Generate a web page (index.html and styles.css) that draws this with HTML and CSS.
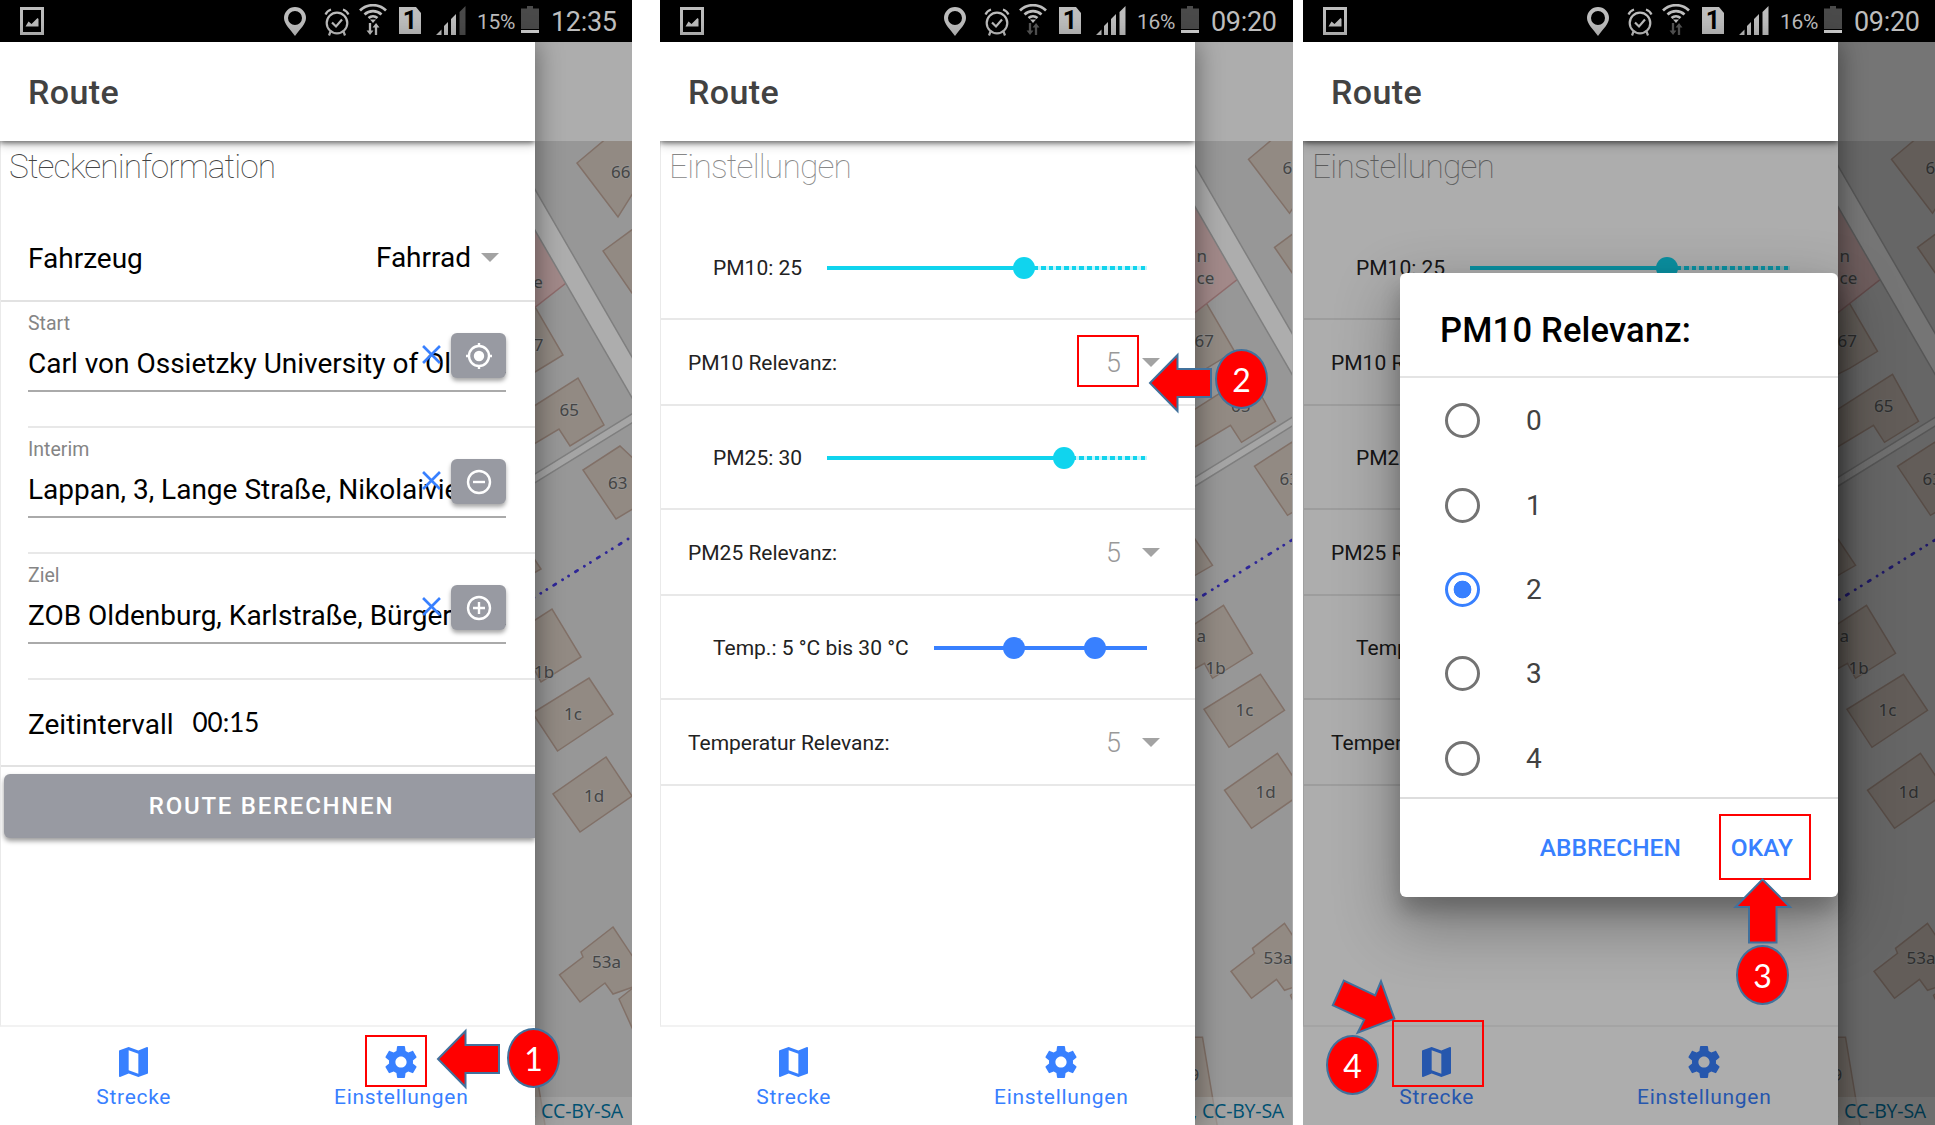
FILE: index.html
```
<!DOCTYPE html>
<html lang="de">
<head>
<meta charset="utf-8">
<title>Route</title>
<link rel="stylesheet" href="styles.css">
</head>
<body>
<svg class="defs" width="0" height="0" aria-hidden="true">
  <symbol id="photo" viewBox="0 0 24 28"><path fill="#bdbdbd" fill-rule="evenodd" d="M0 0h24v28H0zM3 3v22h18V3zM5.500 19.500l3-5 3 2.500 6-6 1 1v7.500z"/></symbol>
  <symbol id="pin" viewBox="0 0 22 29"><path fill="#bdbdbd" fill-rule="evenodd" d="M11 0a11 11 0 0 1 11 11c0 6-6 11-11 18C6 22 0 17 0 11A11 11 0 0 1 11 0zm0 4a7 7 0 1 0 0 14 7 7 0 0 0 0-14z"/></symbol>
  <symbol id="alarm" viewBox="0 0 26 28"><g fill="none" stroke="#bdbdbd" stroke-width="2.200"><circle cx="13" cy="15" r="10.300"/><path d="M8 14.500l4 4 6-7M1.500 6.500C2.500 4 4 2.500 7 1.500M24.500 6.500C23.500 4 22 2.500 19 1.500M6.500 23.500l-1.500 4M19.500 23.500l1.500 4"/></g></symbol>
  <symbol id="wifi" viewBox="0 0 28 19"><g fill="none" stroke="#bdbdbd" stroke-width="2.700"><path d="M1 6.500a18.500 18.500 0 0 1 26 0M5.500 10.500a12.500 12.500 0 0 1 17 0M9.500 14a7 7 0 0 1 9 0"/></g><path fill="#bdbdbd" d="M11 15.500h6L14 19z"/></symbol>
  <symbol id="updown" viewBox="0 0 14 13"><path fill="currentColor" d="M2.500 0h2.500v8h2.500L3.800 13 0 8h2.500zM9 13h2.500V5H14L10.300 0 6.500 5H9z"/></symbol>
  <symbol id="sim" viewBox="0 0 22 27"><path fill="#bdbdbd" d="M0 0h17l5 6v21H0z"/></symbol>
  <symbol id="signal" viewBox="0 0 30 29"><path fill="#bdbdbd" d="M0 29l5.500-5.500V29zM8 29v-9l4-4v13zM15 29V13l5-5v21z"/><path fill="currentColor" d="M23.500 29V6L29.500 0v29z"/></symbol>
  <symbol id="battery" viewBox="0 0 18 27"><path fill="#4a4a4a" d="M0 2.500h6V0h6v2.500h6V23H0z"/><path fill="#cfcfcf" d="M0 24h18v3H0z"/></symbol>
  <symbol id="map" viewBox="3 3 18 18" preserveAspectRatio="none"><path fill="currentColor" d="M20.500 3l-.16.030L15 5.100 9 3 3.360 4.900c-.21.070-.36.250-.36.480V20.500c0 .28.220.5.500.5l.16-.03L9 18.900l6 2.100 5.640-1.900c.21-.07.360-.25.360-.48V3.500c0-.28-.22-.5-.5-.5zM15 19l-6-2.110V5l6 2.110V19z"/></symbol>
  <symbol id="gear" viewBox="2 2 20 20"><path fill="currentColor" d="M19.430 12.980c.04-.32.070-.64.070-.98s-.03-.66-.07-.98l2.110-1.650c.19-.15.240-.42.120-.64l-2-3.460c-.12-.22-.39-.3-.61-.22l-2.490 1c-.52-.4-1.080-.73-1.690-.98l-.38-2.650C14.460 2.180 14.250 2 14 2h-4c-.25 0-.46.180-.49.420l-.38 2.650c-.61.250-1.170.59-1.690.98l-2.490-1c-.23-.09-.49 0-.61.220l-2 3.460c-.13.220-.07.490.12.640l2.110 1.650c-.04.320-.07.650-.07.980s.03.660.07.980l-2.110 1.650c-.19.150-.24.420-.12.640l2 3.460c.12.220.39.300.61.220l2.490-1c.52.400 1.080.730 1.690.980l.38 2.650c.03.240.24.420.49.420h4c.25 0 .46-.18.490-.42l.38-2.650c.61-.25 1.170-.59 1.690-.98l2.490 1c.23.090.49 0 .61-.22l2-3.460c.12-.22.070-.49-.12-.64l-2.110-1.650zM12 15.500c-1.930 0-3.500-1.570-3.500-3.500s1.570-3.500 3.500-3.500 3.500 1.570 3.500 3.500-1.570 3.500-3.500 3.500z"/></symbol>
  <symbol id="ground" viewBox="500 100 140 1030" overflow="visible">
    <g fill="#d7ccc2" stroke="#bfa699" stroke-width="1.500">
      <path d="M577 163l31-26h60l-50 80z"/><path d="M603 251l60-44v96l-31-10z"/>
      <path d="M520 275l15 32 28 48-28 17-30 15z"/>
      <path d="M520 415l58-37 26 47-34 21-11-17-40 24z"/>
      <path d="M620 446l-37 24 33 49 50-30z"/><path d="M515 530l26 39-26 15z"/>
      <path d="M515 633l37-24 29 48-40 25-8-15-18 10z"/>
      <path d="M589 678l24 36-55.500 37-25-38z"/><path d="M606 757l26 39-52 36-27-38z"/>
      <path d="M613 927l40 60-20 0-20 7-8-11-25 19-20.500-27 23.500-18-2-5z"/><path d="M619 999l30-24v90z"/>
      <path d="M515 1041h16l15 90h-30z"/>
    </g>
    <path fill="#efcaca" stroke="#d3a0a0" stroke-width="1.500" d="M515 190l51 93-51 40z"/>
    <path d="M505 158L670 443" stroke="#bbb" stroke-width="22"/>
    <path d="M505 158L670 443" stroke="#fff" stroke-width="19"/>
    <path d="M500 500L665 398" stroke="#bbb" stroke-width="9"/>
    <path d="M500 500L665 398" stroke="#f4f4f4" stroke-width="6"/>
    <path d="M510 612.500L665 516" stroke="#4438e0" stroke-width="2.800" stroke-linecap="round" stroke-dasharray="2.500 8 0.100 7 0.100 8"/>
  </symbol>
  <symbol id="arrow" viewBox="-1 -1 64 58" overflow="visible"><path fill="#f00" stroke="#41719c" stroke-width="2" d="M0 28L27.500 0v14H61v28H27.500v14z"/></symbol>
</svg>

<main class="board">

<section class="phone">
  <header class="status">
    <svg class="photo"><use href="#photo"/></svg>
    <svg class="pin"><use href="#pin"/></svg>
    <svg class="alarm"><use href="#alarm"/></svg>
    <span class="net"><svg class="wifi"><use href="#wifi"/></svg><svg class="updown"><use href="#updown"/></svg></span>
    <span class="sim"><svg><use href="#sim"/></svg><b>1</b></span>
    <svg class="signal weak"><use href="#signal"/></svg>
    <span class="percent">15%</span>
    <svg class="battery"><use href="#battery"/></svg>
    <span class="clock">12:35</span>
  </header>
  <div class="view">
    <div class="backdrop">
      <svg class="ground" viewBox="0 141 632 984"><use href="#ground" x="500" y="100" width="140" height="1030"/>
        <g class="labels"><text x="611" y="178">66</text><text x="513.500" y="265.500">n</text><text x="525" y="288">ce</text><text x="524" y="351">67</text><text x="559.500" y="416">65</text><text x="608" y="489">63</text><text x="534" y="678">1b</text><text x="564" y="720">1c</text><text x="584" y="802">1d</text><text x="592" y="968">53a</text></g>
      </svg>
      <div class="credit">, CC-BY-SA</div>
    </div>
    <div class="drawer">
      <div class="titlebar">Route</div>
      <div class="content">
        <h1 class="dark">Steckeninformation</h1>
        <div class="line vehicle"><span>Fahrzeug</span><span class="pick">Fahrrad<i class="caret"></i></span></div>
        <div class="place"><label>Start</label><div class="entry">Carl von Ossietzky University of Oldenburg</div>
          <svg class="clear" viewBox="0 0 18 18"><path d="M1 1l16 16M17 1L1 17"/></svg>
          <span class="square"><svg viewBox="0 0 28 28"><circle cx="14" cy="14" r="10"/><circle cx="14" cy="14" r="4" fill="#fff"/><path d="M14 1v4M14 23v4M1 14h4M23 14h4"/></svg></span></div>
        <div class="place"><label>Interim</label><div class="entry">Lappan, 3, Lange Straße, Nikolaiviertel</div>
          <svg class="clear" viewBox="0 0 18 18"><path d="M1 1l16 16M17 1L1 17"/></svg>
          <span class="square"><svg viewBox="0 0 28 28"><circle cx="14" cy="14" r="11"/><path d="M8 14h12"/></svg></span></div>
        <div class="place"><label>Ziel</label><div class="entry">ZOB Oldenburg, Karlstraße, Bürgerfelde</div>
          <svg class="clear" viewBox="0 0 18 18"><path d="M1 1l16 16M17 1L1 17"/></svg>
          <span class="square"><svg viewBox="0 0 28 28"><circle cx="14" cy="14" r="11"/><path d="M8 14h12M14 8v12"/></svg></span></div>
        <div class="line interval"><span>Zeitintervall</span><span class="time">00:15</span></div>
        <button class="compute">ROUTE BERECHNEN</button>
      </div>
      <nav class="tabs"><a><svg class="map"><use href="#map"/></svg>Strecke</a><a><svg class="gear"><use href="#gear"/></svg>Einstellungen</a></nav>
    </div>
  </div>
  <div class="mark box1"></div>
  <svg class="arrow a1"><use href="#arrow"/></svg>
  <div class="bubble b1">1</div>
</section>

<section class="phone">
  <header class="status">
    <svg class="photo"><use href="#photo"/></svg>
    <svg class="pin"><use href="#pin"/></svg>
    <svg class="alarm"><use href="#alarm"/></svg>
    <span class="net"><svg class="wifi"><use href="#wifi"/></svg><svg class="updown idle"><use href="#updown"/></svg></span>
    <span class="sim"><svg><use href="#sim"/></svg><b>1</b></span>
    <svg class="signal"><use href="#signal"/></svg>
    <span class="percent">16%</span>
    <svg class="battery"><use href="#battery"/></svg>
    <span class="clock">09:20</span>
  </header>
  <div class="view">
    <div class="backdrop">
      <svg class="ground" viewBox="-11.500 144.700 632 984"><use href="#ground" x="500" y="100" width="140" height="1030"/>
        <g class="labels"><text x="611" y="178">66</text><text x="525" y="265.500">n</text><text x="525" y="288">ce</text><text x="523" y="351">67</text><text x="559.500" y="416">65</text><text x="608" y="489">63</text><text x="525" y="646">a</text><text x="534" y="678">1b</text><text x="564" y="720">1c</text><text x="584" y="802">1d</text><text x="592" y="968">53a</text><text x="518" y="1085">9</text></g>
      </svg>
      <div class="credit">, CC-BY-SA</div>
    </div>
    <div class="drawer">
      <div class="titlebar">Route</div>
      <div class="content">
        <h1>Einstellungen</h1>
        <div class="slide"><span>PM10: 25</span><div class="track"><i class="fill" style="width:61.700%"></i><i class="knob" style="left:61.700%"></i></div></div>
        <div class="rel"><span>PM10 Relevanz:</span><span class="num">5<i class="caret"></i></span></div>
        <div class="slide"><span>PM25: 30</span><div class="track"><i class="fill" style="width:74%"></i><i class="knob" style="left:74%"></i></div></div>
        <div class="rel"><span>PM25 Relevanz:</span><span class="num">5<i class="caret"></i></span></div>
        <div class="slide blue"><span>Temp.: 5 °C bis 30 °C</span><div class="track"><i class="fill" style="width:100%"></i><i class="knob" style="left:37.500%"></i><i class="knob" style="left:75.700%"></i></div></div>
        <div class="rel"><span>Temperatur Relevanz:</span><span class="num">5<i class="caret"></i></span></div>
      </div>
      <nav class="tabs"><a><svg class="map"><use href="#map"/></svg>Strecke</a><a><svg class="gear"><use href="#gear"/></svg>Einstellungen</a></nav>
    </div>
  </div>
  <div class="mark box2"></div>
  <svg class="arrow a2"><use href="#arrow"/></svg>
  <div class="bubble b2">2</div>
</section>

<section class="phone">
  <header class="status">
    <svg class="photo"><use href="#photo"/></svg>
    <svg class="pin"><use href="#pin"/></svg>
    <svg class="alarm"><use href="#alarm"/></svg>
    <span class="net"><svg class="wifi"><use href="#wifi"/></svg><svg class="updown idle"><use href="#updown"/></svg></span>
    <span class="sim"><svg><use href="#sim"/></svg><b>1</b></span>
    <svg class="signal"><use href="#signal"/></svg>
    <span class="percent">16%</span>
    <svg class="battery"><use href="#battery"/></svg>
    <span class="clock">09:20</span>
  </header>
  <div class="view">
    <div class="backdrop">
      <svg class="ground" viewBox="-11.500 144.700 632 984"><use href="#ground" x="500" y="100" width="140" height="1030"/>
        <g class="labels"><text x="611" y="178">66</text><text x="525" y="265.500">n</text><text x="525" y="288">ce</text><text x="523" y="351">67</text><text x="559.500" y="416">65</text><text x="608" y="489">63</text><text x="525" y="646">a</text><text x="534" y="678">1b</text><text x="564" y="720">1c</text><text x="584" y="802">1d</text><text x="592" y="968">53a</text><text x="518" y="1085">9</text></g>
      </svg>
      <div class="credit">, CC-BY-SA</div>
    </div>
    <div class="drawer">
      <div class="titlebar">Route</div>
      <div class="content">
        <h1>Einstellungen</h1>
        <div class="slide"><span>PM10: 25</span><div class="track"><i class="fill" style="width:61.700%"></i><i class="knob" style="left:61.700%"></i></div></div>
        <div class="rel"><span>PM10 Relevanz:</span></div>
        <div class="slide"><span>PM25: 30</span></div>
        <div class="rel"><span>PM25 Relevanz:</span></div>
        <div class="slide"><span>Temp.: 5 °C bis 30 °C</span></div>
        <div class="rel"><span>Temperatur Relevanz:</span></div>
      </div>
      <nav class="tabs"><a><svg class="map"><use href="#map"/></svg>Strecke</a><a><svg class="gear"><use href="#gear"/></svg>Einstellungen</a></nav>
    </div>
    <div class="scrim"></div>
    <div class="dialog">
      <h2>PM10 Relevanz:</h2>
      <ul>
        <li><i class="radio"></i>0</li>
        <li><i class="radio"></i>1</li>
        <li><i class="radio on"></i>2</li>
        <li><i class="radio"></i>3</li>
        <li><i class="radio"></i>4</li>
      </ul>
      <footer><span>ABBRECHEN</span><span>OKAY</span></footer>
    </div>
  </div>
  <div class="mark box3"></div>
  <div class="mark box4"></div>
  <svg class="arrow a3" viewBox="0 0 58 66"><path fill="#f00" stroke="#41719c" stroke-width="2" d="M28.500 1.500L56 29H42.500v35.500H15V29H1.500z"/></svg>
  <svg class="arrow a4" viewBox="28 978 66 58"><path fill="#f00" stroke="#41719c" stroke-width="2" d="M40.800 980.700L72.200 995.300 78 981.300 91.400 1018.700 54.700 1032.700 61.200 1019.700 29.800 1005.300z"/></svg>
  <div class="bubble b3">3</div>
  <div class="bubble b4">4</div>
</section>

</main>
</body>
</html>
```
FILE: styles.css
```
* { box-sizing: border-box; }
body { margin: 0; background: #fff; font-family: Roboto, sans-serif; color: #000; }
.defs { position: absolute; }
.board { display: grid; grid-template-columns: 632px 28px 633px 10px 632px; width: 1935px; height: 1125px; overflow: hidden; }
.phone { position: relative; display: flex; flex-direction: column; height: 1125px; overflow: hidden; grid-row: 1; }
.phone:nth-child(1) { grid-column: 1; }
.phone:nth-child(2) { grid-column: 3; }
.phone:nth-child(3) { grid-column: 5; }

/* status bar */
.status { display: flex; align-items: flex-start; height: 42px; background: #000; color: #bdbdbd; padding-left: 20px; flex: none; }
.status svg { display: block; flex: none; }
.photo { width: 24px; height: 28px; margin-top: 7px; }
.pin { width: 22px; height: 29px; margin: 7px 0 0 240px; }
.alarm { width: 26px; height: 28px; margin: 8px 0 0 18px; }
.net { display: flex; flex-direction: column; align-items: center; width: 28px; margin: 4px 0 0 9px; }
.wifi { width: 28px; height: 19px; }
.updown { width: 14px; height: 12px; color: #bdbdbd; }
.idle { color: #555; }
.sim { position: relative; width: 22px; height: 27px; margin: 7px 0 0 12px; }
.sim svg { width: 22px; height: 27px; }
.sim b { position: absolute; inset: 0; text-align: center; color: #000; font-size: 25px; line-height: 28px; }
.signal { width: 30px; height: 29px; margin: 6px 0 0 15px; color: #bdbdbd; }
.weak { color: #4a4a4a; }
.percent { font-size: 21px; line-height: 42px; width: 55px; padding-left: 11px; height: 42px; padding-top: 1px; white-space: nowrap; letter-spacing: -.3px; }
.battery { width: 18px; height: 27px; margin-top: 6px; }
.clock { font-size: 27px; line-height: 42px; margin-left: 12px; padding-top: 1px; letter-spacing: -.3px; }

.view { position: relative; flex: 1; }
.backdrop { position: absolute; inset: 0; background: #fff; overflow: hidden; padding-top: 99px; }
.backdrop::after { content: ""; position: absolute; inset: 0; background: rgba(0,0,0,.32); }
.ground { display: block; width: 632px; height: 984px; background: #dfdfdf; }
.labels { font: 17px "Noto Sans", sans-serif; fill: #666; stroke: #ddd; stroke-width: 2px; stroke-opacity: .6; paint-order: stroke; }
.credit { position: absolute; left: 528px; right: 0; bottom: 0; height: 28px; padding: 0 9px 0 0; background: rgba(255,255,255,.5); color: #0078a8; font: 19.500px/27px "Open Sans", sans-serif; text-align: right; white-space: nowrap; letter-spacing: -.2px; }

.drawer { position: relative; display: flex; flex-direction: column; width: 535px; height: 1083px; background: #fff; box-shadow: 2px 0 24px rgba(0,0,0,.4); }
.titlebar { position: relative; z-index: 1; height: 99px; padding-left: 28px; background: #fff; font-size: 34px; font-weight: 500; line-height: 101px; color: #424242; box-shadow: 0 2px 5px rgba(0,0,0,.5), 0 4px 10px rgba(0,0,0,.18); clip-path: inset(0 0 -20px 0); letter-spacing: .4px; }
.content { height: 886px; border-left: 1px solid #eaeaea; border-bottom: 2px solid #f2f2f2; overflow: hidden; }
h1 { margin: 0; padding: 0 0 0 8px; height: 75px; font-size: 33.500px; font-weight: 100; line-height: 52px; letter-spacing: -.8px; color: #888; }
.dark { color: #444; letter-spacing: -.9px; }
.line { display: flex; align-items: center; margin-left: -1px; padding-left: 28px; background: #fff; font-size: 28px; border-bottom: 2px solid #e2e2e2; }
.vehicle { height: 86px; justify-content: space-between; padding-right: 36px; padding-top: 1px; }
.pick { display: flex; align-items: center; gap: 10px; margin-top: -2px; }
.caret { width: 0; height: 0; border: 9px solid transparent; border-top: 9px solid #a3a3a3; border-bottom: 0; }
.place { position: relative; height: 126px; margin-left: 27px; padding-top: 12px; border-bottom: 2px solid #e8e8e8; }
.place label { display: block; font-size: 19.500px; line-height: 20px; color: #858585; }
.entry { width: 478px; height: 58px; padding-right: 54px; font-size: 28px; line-height: 59px; white-space: nowrap; overflow: hidden; border-bottom: 2px solid #aaa; }
.clear { position: absolute; left: 394px; top: 43px; width: 19px; height: 19px; fill: none; stroke: #3880ff; stroke-width: 2.500; }
.square { position: absolute; left: 423px; top: 31px; width: 55px; height: 45px; border-radius: 6px; background: #989aa2; box-shadow: 0 3px 4px rgba(0,0,0,.35); display: flex; align-items: center; justify-content: center; }
.square svg { width: 28px; height: 28px; fill: none; stroke: #fff; stroke-width: 2.400; }
.interval { height: 87px; padding-top: 4px; }
.time { font: 26px Lato, sans-serif; margin-left: 19px; margin-top: -5px; }
.compute { display: block; width: 531px; height: 64px; margin: 7px 0 0 3px; padding: 0 0 0 4px; border: 0; border-radius: 6px 0 0 6px; background: #989aa2; color: #fff; font: 500 24px/60px Roboto, sans-serif; letter-spacing: 1.750px; box-shadow: 0 3px 5px rgba(0,0,0,.4); }

.tabs { display: flex; height: 98px; color: #3880ff; font-size: 21px; letter-spacing: .7px; }
.tabs a { flex: 1; display: flex; flex-direction: column; align-items: center; justify-content: flex-start; padding-top: 19px; line-height: 24px; }
.tabs svg { width: 32px; height: 32px; margin-bottom: 7px; }
.tabs .map { width: 29px; height: 30px; margin: 1px 0 8px; }

.slide { display: flex; align-items: center; height: 104px; margin-left: -1px; padding: 1px 48px 0 53px; gap: 25px; background: #fff; border-bottom: 2px solid #e8e8e8; font-size: 21px; white-space: nowrap; color: #222; }
.rel { display: flex; align-items: center; justify-content: space-between; height: 86px; margin-left: -1px; padding: 2px 35px 0 28px; background: #fff; border-bottom: 2px solid #e8e8e8; font-size: 21px; color: #222; }
.num { display: flex; align-items: center; gap: 21px; font-size: 27px; font-weight: 300; color: #999; margin-top: -1px; }
.track { position: relative; flex: 1; height: 4px; background: repeating-linear-gradient(90deg, #10d4ee 0 4.500px, #c4f5fb 4.500px 7.650px); color: #10d4ee; }
.blue .track { color: #3880ff; background: #3880ff; }
.fill { position: absolute; left: 0; top: 0; height: 4px; background: currentColor; }
.knob { position: absolute; top: -9px; width: 22px; height: 22px; margin-left: -11px; border-radius: 50%; background: currentColor; }

.scrim { position: absolute; inset: 0; background: rgba(0,0,0,.32); }
.dialog { position: absolute; left: 97px; top: 231px; width: 438px; height: 624px; border-radius: 6px; background: #fff; box-shadow: 0 14px 20px rgba(0,0,0,.2), 0 24px 60px 6px rgba(0,0,0,.3); }
h2 { margin: 0; height: 105px; padding-left: 40px; font-size: 34.500px; font-weight: 500; line-height: 114px; letter-spacing: .2px; border-bottom: 2px solid #e4e4e4; }
.dialog ul { list-style: none; margin: 0; padding: 0; height: 421px; border-bottom: 2px solid #ddd; overflow: hidden; }
.dialog li { display: flex; align-items: center; height: 84.400px; gap: 46px; padding: 1px 0 0 45px; font-size: 28px; color: #424242; }
.radio { width: 35px; height: 35px; border: 3.500px solid #737373; border-radius: 50%; }
.on { border-color: #3880ff; background: radial-gradient(circle, #3880ff 8.500px, #fff 9.200px); }
.dialog footer { display: flex; justify-content: flex-end; gap: 50px; padding-right: 45px; font-size: 24.500px; font-weight: 500; line-height: 97px; color: #3880ff; }

/* callouts */
.mark { position: absolute; border: 2px solid #f00; }
.box1 { left: 365px; top: 1035px; width: 62px; height: 52px; }
.box2 { left: 417px; top: 335px; width: 62px; height: 52px; }
.box3 { left: 416px; top: 814px; width: 92px; height: 66px; }
.box4 { left: 89px; top: 1020px; width: 92px; height: 67px; }
.arrow { position: absolute; overflow: visible; width: 64px; height: 58px; }
.a1 { left: 437px; top: 1030px; }
.a2 { left: 489px; top: 354px; }
.a3 { left: 431px; top: 878px; width: 58px; height: 66px; }
.a4 { left: 28px; top: 978px; width: 66px; height: 58px; }
.bubble { position: absolute; width: 53px; height: 60px; border: 2px solid #41719c; border-radius: 50%; background: #f00; color: #fff; text-align: center; font: 32px/57px Lato, sans-serif; }
.b1 { left: 507px; top: 1028px; }
.b2 { left: 555px; top: 349px; }
.b3 { left: 433px; top: 945px; }
.b4 { left: 23px; top: 1035px; }
```
